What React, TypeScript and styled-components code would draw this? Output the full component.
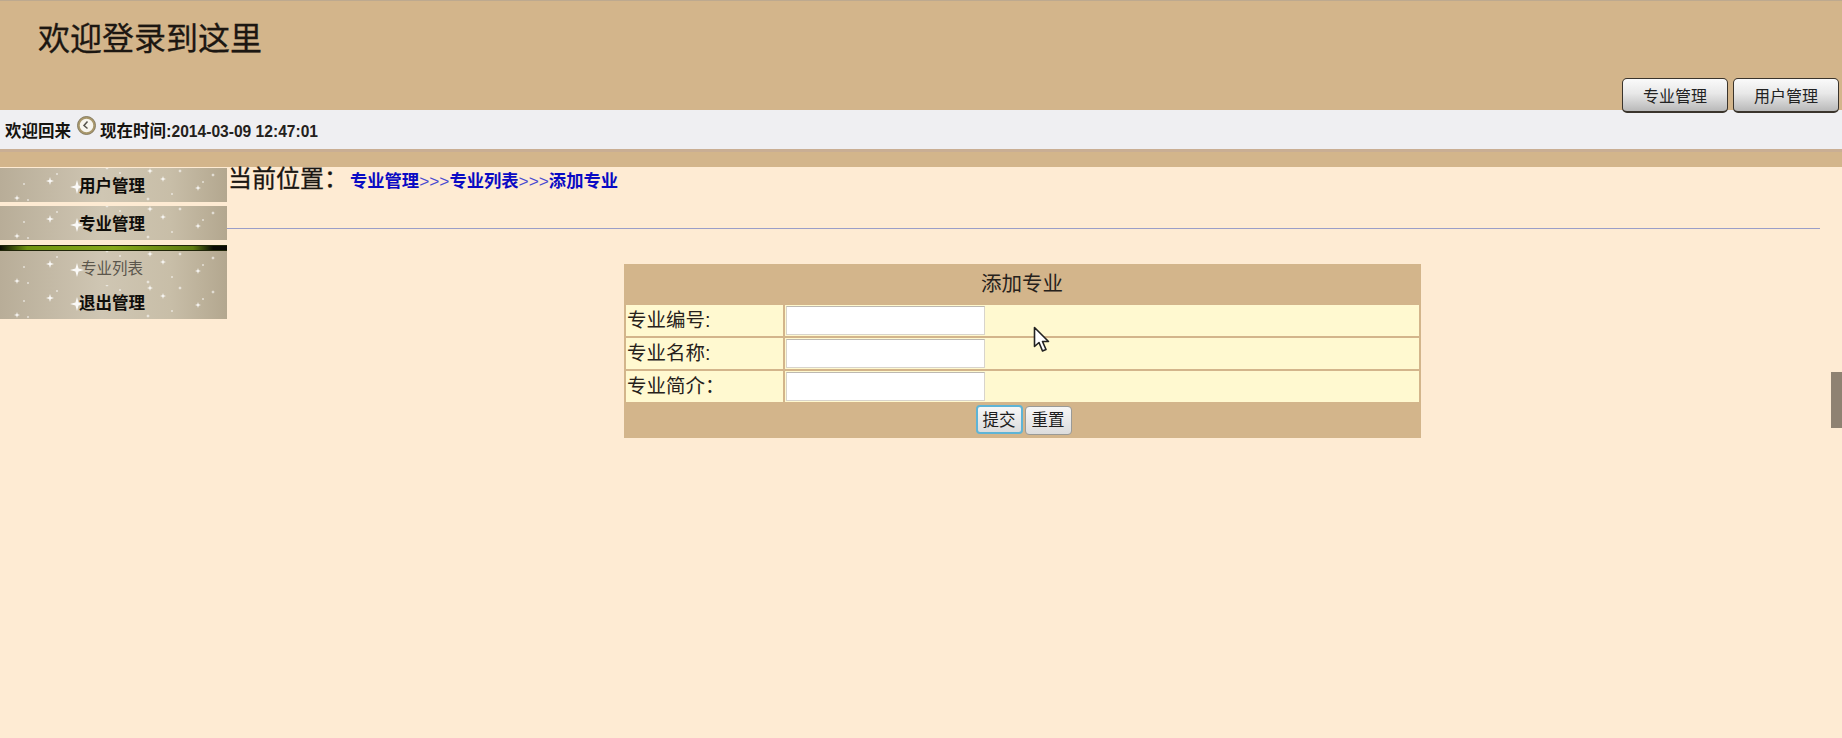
import React from 'react'
import styled, { createGlobalStyle } from 'styled-components'

const cjk = `"Liberation Sans", "Noto Sans CJK SC", sans-serif`

const GlobalStyle = createGlobalStyle`
  html, body {
    margin: 0;
    padding: 0;
    height: 100%;
    overflow: hidden;
    background: #feebd3;
    font-family: ${cjk};
  }
`

const sparkles = [
  { x: 77, y: 19, r: 7 },
  { x: 50, y: 13, r: 4 },
  { x: 17, y: 30, r: 3 },
  { x: 198, y: 20, r: 3 },
  { x: 163, y: 11, r: 3 },
  { x: 180, y: 3, r: 2 },
  { x: 213, y: 7, r: 2 },
  { x: 150, y: 3, r: 3 },
  { x: 107, y: 0, r: 2 },
  { x: 148, y: 31, r: 2 },
]

const dots = [
  { x: 24, y: 16 },
  { x: 57, y: 6 },
  { x: 28, y: 32 },
  { x: 203, y: 14 },
  { x: 120, y: 5 },
  { x: 172, y: 26 },
]

const Sparkles = () => (
  <SparkleLayer viewBox="0 0 227 34">
    {sparkles.map((s, i) => {
      const w = s.r * 0.22
      const d = `M${s.x} ${s.y - s.r}L${s.x + w} ${s.y - w}L${s.x + s.r} ${s.y}L${s.x + w} ${s.y + w}L${s.x} ${s.y + s.r}L${s.x - w} ${s.y + w}L${s.x - s.r} ${s.y}L${s.x - w} ${s.y - w}Z`
      return <path key={i} d={d} fill="#fff" opacity={0.9} />
    })}
    {dots.map((s, i) => (
      <circle key={i} cx={s.x} cy={s.y} r="1" fill="#fff" opacity={0.6} />
    ))}
  </SparkleLayer>
)

const ClockIcon = () => (
  <svg width="19" height="19" viewBox="0 0 19 19">
    <circle cx="9.5" cy="9.5" r="8" fill="#f7f5ee" stroke="#a9986c" strokeWidth="2.4" />
    <circle cx="9.5" cy="9.5" r="9.1" fill="none" stroke="#6b6450" strokeWidth="0.6" />
    <path d="M10.5 5.5L7 9.5l3.5 3" fill="none" stroke="#55524a" strokeWidth="1.5" />
  </svg>
)

const MenuItem = ({ label, plain }: { label: string; plain?: boolean }) => (
  <SideItem>
    <Sparkles />
    <SideLabel $plain={plain}>{label}</SideLabel>
  </SideItem>
)

const fields = ['专业编号:', '专业名称:', '专业简介：']

const App = () => (
  <>
    <GlobalStyle />
    <Header>
      <Title>欢迎登录到这里</Title>
      <NavButtons>
        <NavButton>专业管理</NavButton>
        <NavButton>用户管理</NavButton>
      </NavButtons>
    </Header>
    <WelcomeBar>
      <span>欢迎回来</span>
      <ClockIcon />
      <span>
        现在时间:<Stamp>2014-03-09 12:47:01</Stamp>
      </span>
    </WelcomeBar>
    <Stripe />
    <Body>
      <Sidebar>
        <MenuItem label="用户管理" />
        <MenuItem label="专业管理" />
        <GreenBar />
        <MenuItem label="专业列表" plain />
        <MenuItem label="退出管理" />
      </Sidebar>
      <Main>
        <Breadcrumb>
          <Location>当前位置：</Location>
          <Crumbs>
            专业管理<Arrows>&gt;&gt;&gt;</Arrows>专业列表<Arrows>&gt;&gt;&gt;</Arrows>添加专业
          </Crumbs>
        </Breadcrumb>
        <Rule />
        <FormTable>
          <colgroup>
            <col width="157" />
            <col />
          </colgroup>
          <tbody>
            <tr>
              <CaptionCell colSpan={2}>添加专业</CaptionCell>
            </tr>
            {fields.map(f => (
              <tr key={f}>
                <LabelCell>{f}</LabelCell>
                <FieldCell>
                  <TextInput type="text" />
                </FieldCell>
              </tr>
            ))}
            <tr>
              <ActionCell colSpan={2}>
                <FormButton $focused>提交</FormButton>
                <FormButton>重置</FormButton>
              </ActionCell>
            </tr>
          </tbody>
        </FormTable>
      </Main>
    </Body>
    <Pointer width="17" height="27" viewBox="0 0 17 27">
      <path
        d="M1.5 1.5V20.5L6 16.5L9.5 25L13 23.5L9.5 15.5H15.5Z"
        fill="#fff"
        stroke="#222"
        strokeWidth="1.6"
        strokeLinejoin="round"
      />
    </Pointer>
    <ScrollThumb />
  </>
)

const Header = styled.div`
  position: relative;
  height: 110px;
  box-sizing: border-box;
  padding: 18px 0 0 38px;
  background: #d3b58b;
  border-top: 1px solid #bda98f;
`

const Title = styled.div`
  font-size: 32px;
  line-height: 40px;
  font-weight: 400;
  color: #1c1712;
  -webkit-text-stroke: 0.3px #1c1712;
`

const NavButtons = styled.div`
  position: absolute;
  right: 3px;
  bottom: -3px;
  display: flex;
  gap: 5px;
`

const NavButton = styled.div`
  width: 106px;
  height: 35px;
  box-sizing: border-box;
  display: flex;
  align-items: center;
  justify-content: center;
  border: 1px solid #3a342c;
  border-width: 1px 1px 2px;
  border-radius: 5px;
  background: linear-gradient(#fafafa, #e8e8e8 45%, #b9b9b9);
  font-size: 16px;
  color: #222;
`

const WelcomeBar = styled.div`
  height: 39px;
  box-sizing: border-box;
  display: flex;
  align-items: center;
  gap: 4px;
  padding-left: 5px;
  background: #efeff2;
  font-size: 16.5px;
  font-weight: 700;
  color: #15130f;
  white-space: pre;

  svg {
    margin: -8px 0 0 2px;
  }
`

const Stamp = styled.span`
  font-size: 15.6px;
  color: #24211c;
`

const Stripe = styled.div`
  height: 18px;
  box-sizing: border-box;
  background: #d3b58b;
  border-top: 3px solid #c9ae94;
`

const Body = styled.div`
  display: flex;
  align-items: flex-start;
`

const Sidebar = styled.div`
  width: 227px;
  flex: none;
  padding-top: 1px;
  display: flex;
  flex-direction: column;
`

const SideItem = styled.div`
  position: relative;
  height: 34px;
  display: flex;
  align-items: center;
  justify-content: center;
  overflow: hidden;
  background: linear-gradient(90deg, #b8ad98, #cfc6b3 45%, #c8bea8 75%, #b3a78f);

  &:nth-child(2) {
    margin-top: 4px;
  }
`

const SparkleLayer = styled.svg`
  position: absolute;
  inset: 0;
  width: 100%;
  height: 100%;
  filter: blur(0.4px);
`

const SideLabel = styled.span<{ $plain?: boolean }>`
  position: relative;
  margin: ${p => (p.$plain ? '-3px 0 0 -3px' : '0 0 0 -3px')};
  font-size: ${p => (p.$plain ? 15.5 : 16.5)}px;
  font-weight: ${p => (p.$plain ? 400 : 700)};
  color: ${p => (p.$plain ? '#5b564c' : '#0f0d0a')};
`

const GreenBar = styled.div`
  height: 6px;
  box-sizing: border-box;
  margin-top: 5px;
  border-block: 1px solid #20260a;
  background: linear-gradient(90deg, #0c0c04, #6f9410 12%, #86a81a 50%, #5d7c10 85%, #0a0a05 94%);
`

const Main = styled.div`
  flex: 1;
  padding-right: 22px;
`

const Breadcrumb = styled.div`
  height: 61px;
  box-sizing: border-box;
  display: flex;
  align-items: flex-start;
  padding-left: 1px;
`

const Location = styled.span`
  width: 122px;
  font-size: 24px;
  line-height: 24px;
  white-space: nowrap;
  color: #1a1612;
  -webkit-text-stroke: 0.3px #1a1612;
`

const Crumbs = styled.span`
  margin-top: 3px;
  font-size: 17.3px;
  line-height: 22px;
  font-weight: 700;
  color: #0a0ac4;
`

const Arrows = styled.span`
  font-weight: 400;
  color: #4a4ad0;
`

const Rule = styled.div`
  height: 1px;
  background: #9a9ec8;
`

const FormTable = styled.table`
  width: 797px;
  margin: 35px 0 0 397px;
  border-collapse: separate;
  border-spacing: 2px;
  background: #d3b58b;
  table-layout: fixed;
  font-size: 19.5px;
  line-height: 24px;
  color: #26211b;
`

const CaptionCell = styled.td`
  height: 37px;
  padding: 0 1px 2px 0;
  box-sizing: border-box;
  text-align: center;
  font-size: 20.5px;
`

const LabelCell = styled.td`
  height: 31px;
  padding: 0 0 1px 1px;
  box-sizing: border-box;
  background: #fff9d0;
  white-space: nowrap;
`

const FieldCell = styled.td`
  height: 31px;
  padding: 1px 0 1px 1px;
  box-sizing: border-box;
  background: #fff9d0;
`

const TextInput = styled.input`
  display: block;
  width: 199px;
  height: 29px;
  box-sizing: border-box;
  border: 1px solid #d8d4cc;
  border-top-color: #bdb9b1;
  background: #fff;
`

const ActionCell = styled.td`
  height: 32px;
  padding: 0;
  text-align: center;
  vertical-align: top;
`

const FormButton = styled.button<{ $focused?: boolean }>`
  width: 47px;
  height: 29px;
  margin: 1px 0 0 2px;
  padding: 0 0 3px;
  border: ${p => (p.$focused ? '2px solid #5eb4d6' : '1px solid #9a9a96')};
  border-radius: 4px;
  background: linear-gradient(#f7f7f7, #dcdcdc);
  font-family: ${cjk};
  font-size: 16.5px;
  color: #1c1c1c;
`

const Pointer = styled.svg`
  position: absolute;
  left: 1033px;
  top: 326px;
`

const ScrollThumb = styled.div`
  position: absolute;
  left: 1831px;
  top: 372px;
  width: 11px;
  height: 56px;
  background: #8f8272;
`

export default App
